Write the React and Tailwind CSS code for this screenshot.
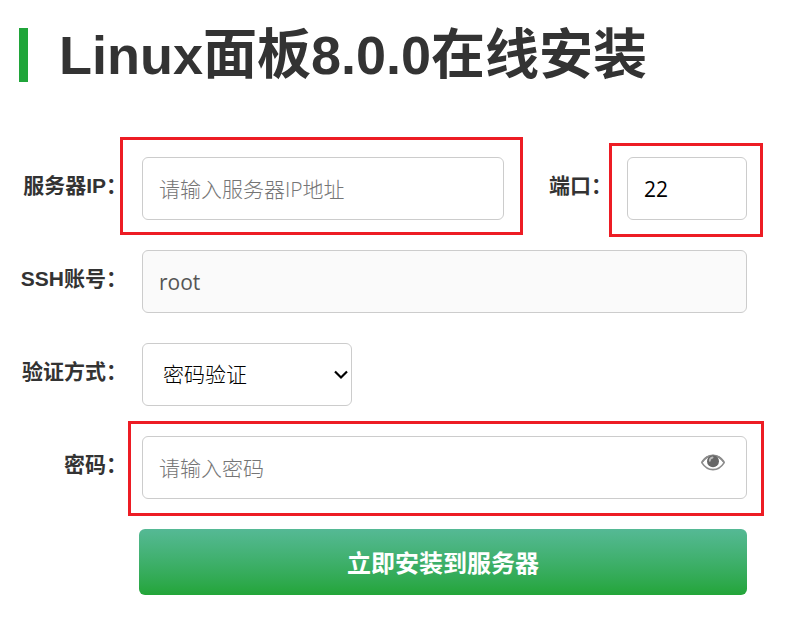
import { useState } from "react";

const labelClass = "shrink-0 whitespace-nowrap pb-1.5 text-right text-[21px] font-bold leading-8 text-[#333]";

const fieldClass =
  "h-[63px] w-full rounded-md border border-[#ccc] bg-white px-4 font-['Open_Sans','Noto_Sans_CJK_SC',sans-serif] text-[21px] text-black outline-none placeholder:font-light placeholder:text-[#757575]";

function Frame({ className }) {
  return <span aria-hidden="true" className={`pointer-events-none absolute border-3 border-[#ed1c24] ${className}`} />;
}

function ChevronIcon({ className }) {
  return (
    <svg viewBox="0 0 14 10" className={`h-2.5 w-3.5 ${className}`} fill="none" aria-hidden="true">
      <path d="M1 1.500 7 7.500 13 1.500" stroke="#000" strokeWidth="2.200" />
    </svg>
  );
}

function EyeIcon() {
  return (
    <svg viewBox="0 0 24 17" className="h-[17px] w-6" fill="none">
      <path d="M0.8 8.600C3.500 4.400 7.500 1.500 12 1.500s8.500 2.900 11.200 7.100C20.500 12.900 16.500 15.600 12 15.600S3.500 12.900 0.800 8.600Z" fill="#fff" stroke="#8c8c8c" strokeWidth="1.600" />
      <path d="M1 8C4 3.600 7.500 1.500 12 1.500s8 2.100 11 6.500" stroke="#8c8c8c" strokeWidth="2" />
      <circle cx="12" cy="7.200" r="6" fill="#666" />
      <path d="M8.800 6.800c0-1.800 1.200-3 2.800-3.300" stroke="#bbb" strokeWidth="1.800" strokeLinecap="round" />
    </svg>
  );
}

export default function App() {
  const [ip, setIp] = useState("");
  const [port, setPort] = useState("22");
  const [authType, setAuthType] = useState("password");
  const [password, setPassword] = useState("");
  const [visible, setVisible] = useState(false);

  return (
    <main className="min-h-screen bg-white pt-7 pr-[46px] pb-12 pl-[19px] font-['Liberation_Sans','Noto_Sans_CJK_SC',sans-serif]">
      <h1 className="border-l-9 border-[#20a53a] pl-[31px] text-[54px] font-bold leading-[54px] text-[#333]">Linux面板8.0.0在线安装</h1>

      <form className="mt-[75px] flex flex-col gap-[30px]" onSubmit={(event) => event.preventDefault()}>
        <div className="flex items-center gap-[15px]">
          <label htmlFor="ip" className={`w-[108px] ${labelClass}`}>
            服务器IP：
          </label>
          <div className="relative min-w-0 flex-1">
            <input id="ip" type="text" value={ip} onChange={(event) => setIp(event.target.value)} placeholder="请输入服务器IP地址" className={fieldClass} />
            <Frame className="-top-5 -right-[19px] -bottom-[15px] -left-[22px]" />
          </div>
          <label htmlFor="port" className={`ml-[30px] ${labelClass}`}>
            端口：
          </label>
          <div className="relative w-[120px] shrink-0">
            <input id="port" type="text" value={port} onChange={(event) => setPort(event.target.value)} className={fieldClass} />
            <Frame className="-top-3.5 -right-4 -bottom-[17px] -left-[18px]" />
          </div>
        </div>

        <div className="flex items-center gap-[15px]">
          <label htmlFor="account" className={`w-[108px] ${labelClass}`}>
            SSH账号：
          </label>
          <input
            id="account"
            type="text"
            value="root"
            disabled
            className="h-[63px] min-w-0 flex-1 rounded-md border border-[#ccc] bg-[#fafafa] px-4 font-['Open_Sans','Noto_Sans_CJK_SC',sans-serif] text-[21px] text-[#555]"
          />
        </div>

        <div className="flex items-center gap-[15px]">
          <label htmlFor="auth" className={`w-[108px] ${labelClass}`}>
            验证方式：
          </label>
          <div className="relative w-[210px]">
            <select id="auth" value={authType} onChange={(event) => setAuthType(event.target.value)} className={`appearance-none pl-5 font-light ${fieldClass}`}>
              <option value="password">密码验证</option>
              <option value="key">密钥验证</option>
            </select>
            <ChevronIcon className="pointer-events-none absolute top-[27px] right-1" />
          </div>
        </div>

        <div className="flex items-center gap-[15px]">
          <label htmlFor="password" className={`w-[108px] ${labelClass}`}>
            密码：
          </label>
          <div className="relative min-w-0 flex-1">
            <input
              id="password"
              type={visible ? "text" : "password"}
              value={password}
              onChange={(event) => setPassword(event.target.value)}
              placeholder="请输入密码"
              className={fieldClass}
            />
            <button type="button" aria-label="显示密码" onClick={() => setVisible(!visible)} className="absolute top-[18px] right-[22px]">
              <EyeIcon />
            </button>
            <Frame className="-top-[15px] -right-[17px] -bottom-[17px] -left-3.5" />
          </div>
        </div>

        <button type="submit" className="ml-[120px] h-[66px] rounded-md bg-linear-to-b from-[#55b995] to-[#23a538] pt-1 text-2xl font-bold text-white">
          立即安装到服务器
        </button>
      </form>
    </main>
  );
}
